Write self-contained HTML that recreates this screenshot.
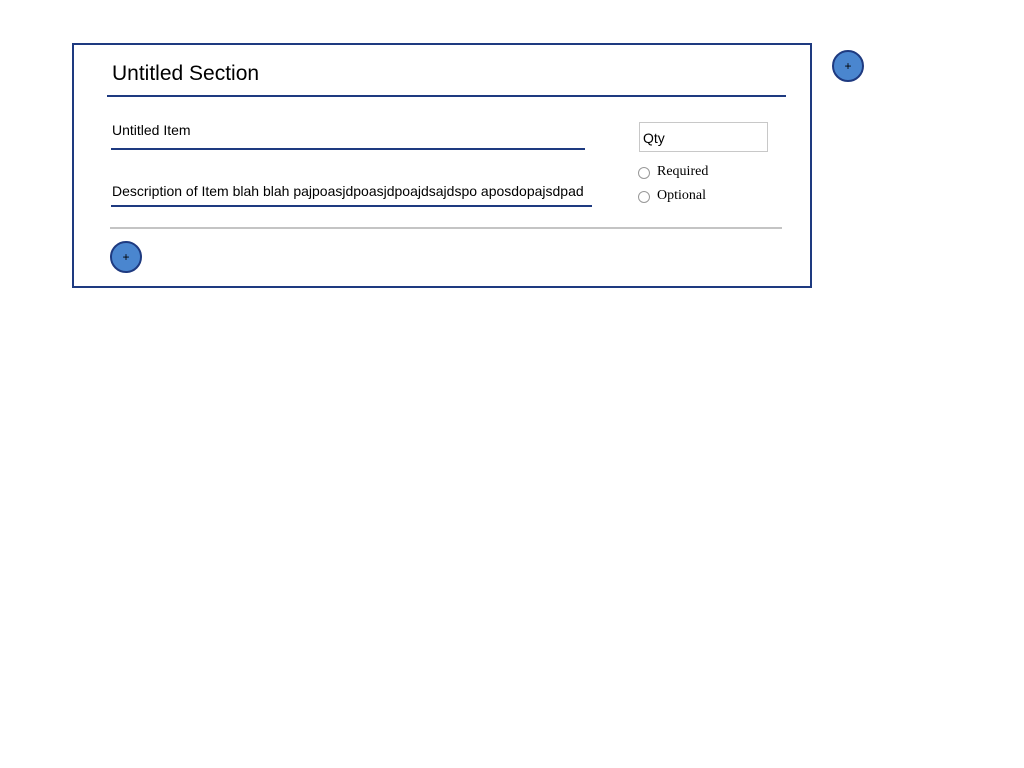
<!DOCTYPE html>
<html><head><style>
body{margin:0;width:1024px;height:768px;background:#fff;position:relative;font-family:"Liberation Sans",sans-serif;}
.a{position:absolute}
.btn{position:absolute;width:32px;height:32px;border:2px solid #1e3a80;background:#4a86cf;border-radius:50%;box-sizing:border-box;font-size:12px;text-align:center;line-height:28px;color:#000}
.radio{position:absolute;width:12px;height:12px;border:1px solid #999;border-radius:50%;box-sizing:border-box;background:#fff}
.ser{font-family:"Liberation Serif",serif;font-size:14px;position:absolute}
</style></head><body>
<div class="a" style="left:72px;top:43px;width:740px;height:245px;border:2px solid #1e3a80;box-sizing:border-box"></div>
<div class="a" style="left:112px;top:62px;font-size:21px">Untitled Section</div>
<div class="a" style="left:107px;top:95px;width:679px;height:2px;background:#1e3a80"></div>
<div class="a" style="left:112px;top:122px;font-size:14px">Untitled Item</div>
<div class="a" style="left:111px;top:148px;width:474px;height:2px;background:#1e3a80"></div>
<div class="a" style="left:112px;top:183px;font-size:14px">Description of Item blah blah pajpoasjdpoasjdpoajdsajdspo aposdopajsdpad</div>
<div class="a" style="left:111px;top:205px;width:481px;height:2px;background:#1e3a80"></div>
<div class="a" style="left:110px;top:227px;width:672px;height:2px;background:#c4c4c4"></div>
<div class="a" style="left:639px;top:122px;width:129px;height:30px;border:1px solid #c8c8c8;box-sizing:border-box;font-size:14px;padding:7px 0 0 3px">Qty</div>
<div class="radio" style="left:638px;top:167px"></div>
<div class="ser" style="left:657px;top:164px">Required</div>
<div class="radio" style="left:638px;top:191px"></div>
<div class="ser" style="left:657px;top:188px">Optional</div>
<div class="btn" style="left:110px;top:241px">+</div>
<div class="btn" style="left:832px;top:50px">+</div>
</body></html>
